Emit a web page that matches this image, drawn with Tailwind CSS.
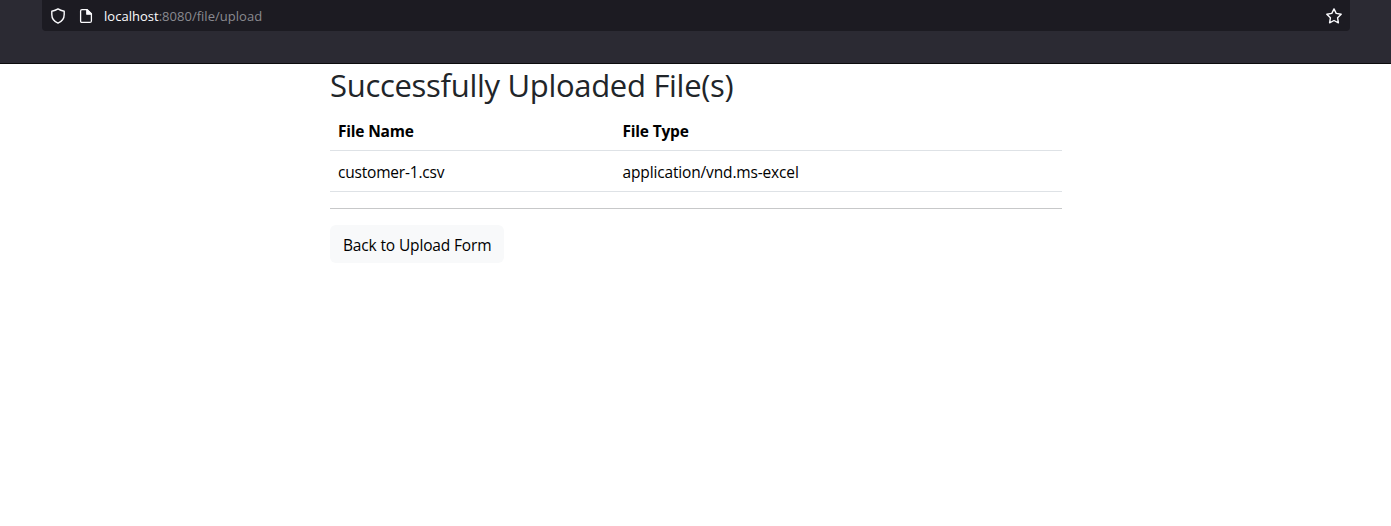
<!DOCTYPE html>
<html lang="en">
<head>
<meta charset="utf-8">
<title>Upload result</title>
<script src="https://cdn.jsdelivr.net/npm/@tailwindcss/browser@4"></script>
</head>
<body class="h-[526px] overflow-hidden bg-white font-['Segoe_UI','Open_Sans',sans-serif] text-base text-black">
<header class="h-16 border-b border-[#0c0c0d] bg-[#2b2a33] px-[42px]">
  <div class="flex h-[31px] w-[1308px] items-center rounded-b bg-[#1c1b22] pl-2 pr-2 text-[#fbfbfe]">
    <svg class="size-4 shrink-0" viewBox="0 0 16 16" fill="none" stroke="currentColor" stroke-width="1.4" stroke-linejoin="round"><path d="M8 .9Q10.5 2.6 14.2 3.2V6.6C14.2 10.6 11.8 13.7 8 15.2 4.2 13.7 1.8 10.6 1.8 6.6V3.2Q5.5 2.6 8 .9Z"/></svg>
    <svg class="ml-3 size-4 shrink-0" viewBox="0 0 16 16" fill="none" stroke="currentColor" stroke-width="1.3" stroke-linejoin="round"><path d="M4 1.6H9.2L13.4 5.8V12.9Q13.4 14.4 11.9 14.4H4Q2.6 14.4 2.6 12.9V3.1Q2.6 1.6 4 1.6Z"/><path d="M8.8 1.6V6.2H13.4Z" fill="currentColor"/></svg>
    <span class="ml-2.5 text-[13px] leading-4 tracking-[0.02px]">localhost<span class="text-[#8a8a90]">:8080/file/upload</span></span>
    <svg class="ml-auto size-4 shrink-0" viewBox="0 0 16 16" fill="none" stroke="currentColor" stroke-width="1.4" stroke-linejoin="round"><path d="M8 .9 10.2 5.4 15.2 6.2 11.6 9.8 12.4 14.8 8 12.5 3.6 14.8 4.4 9.8 .8 6.2 5.8 5.4Z"/></svg>
  </div>
</header>
<main class="ml-[330px] w-[732px]">
  <h2 class="h-[45px] whitespace-nowrap pt-0.5 text-[31px] leading-[38px] text-[#212529] tracking-[-0.3px]">Successfully Uploaded File(s)</h2>
  <table class="w-full table-fixed border-collapse text-left text-[15.5px] leading-6">
    <thead><tr class="h-[41px] border-b border-[#dee2e6]"><th class="w-[284.5px] px-2 pt-2.5 pb-1.5 font-bold tracking-[-0.2px]">File Name</th><th class="px-2 pt-2.5 pb-1.5 font-bold tracking-[-0.2px]">File Type</th></tr></thead>
    <tbody><tr class="h-[41px] border-b border-[#dee2e6]"><td class="px-2 pt-[9px] pb-[7px] tracking-[-0.2px]">customer-1.csv</td><td class="px-2 pt-[9px] pb-[7px] tracking-[-0.15px]">application/vnd.ms-excel</td></tr></tbody>
  </table>
  <hr class="my-4 border-t border-[#c7c8c9]">
  <a class="flex h-[38px] w-[174px] items-center whitespace-nowrap rounded-md bg-[#f8f9fa] pl-[13px] pt-1 text-[15.5px] tracking-[-0.15px]">Back to Upload Form</a>
</main>
</body>
</html>
